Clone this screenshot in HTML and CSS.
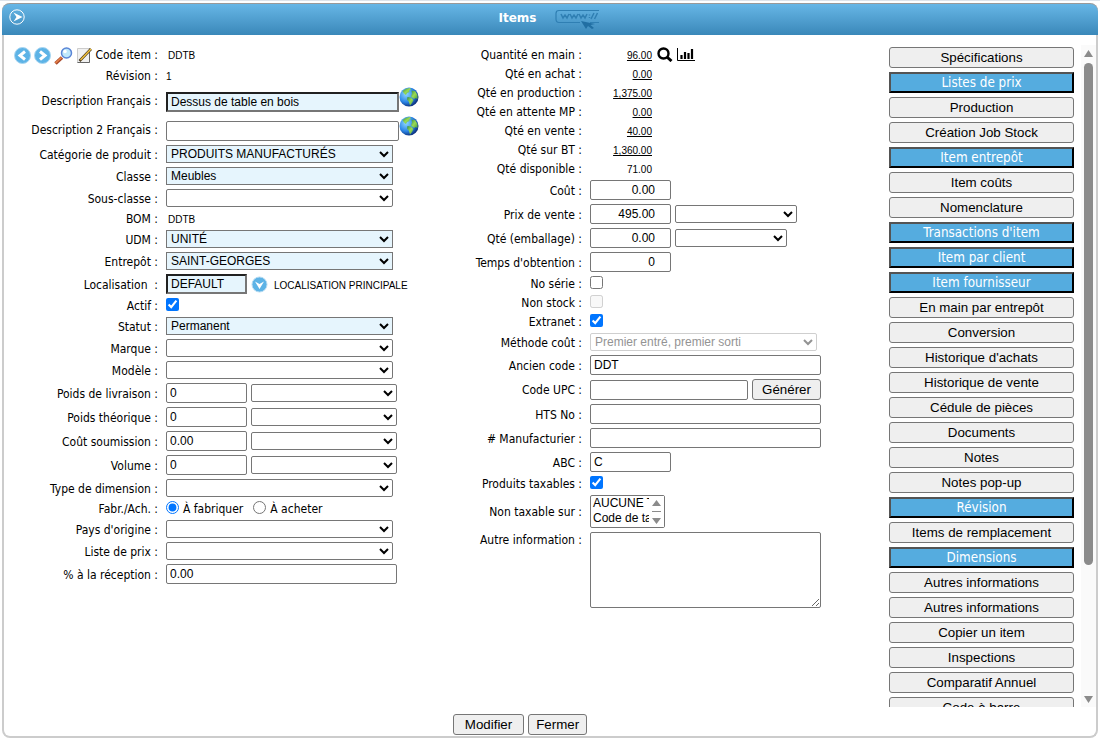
FILE: index.html
```html
<!DOCTYPE html>
<html lang="fr">
<head>
    <meta charset="UTF-8">
    <meta name="viewport" content="width=device-width, initial-scale=1.0">
    <title>Items</title>
    <link rel="stylesheet" href="styles.css">
</head>
<body>
    <!-- Icons used more than once -->
    <svg class="defs" width="0" height="0">
        <defs>
            <radialGradient id="sea" cx="35%" cy="35%" r="70%">
                <stop offset="0" stop-color="#8fd8ff"/>
                <stop offset="0.6" stop-color="#2c86e6"/>
                <stop offset="1" stop-color="#0a2c78"/>
            </radialGradient>
            <linearGradient id="land" x1="0" y1="0" x2="1" y2="1">
                <stop offset="0" stop-color="#2f8a4a"/>
                <stop offset="0.5" stop-color="#9ada55"/>
                <stop offset="1" stop-color="#4f9f3a"/>
            </linearGradient>
            <symbol id="globe" viewBox="0 0 20 20">
                <circle cx="10" cy="10" r="9.500" fill="url(#sea)"/>
                <path d="M3.500 4 Q7 1 11 1 L12 2.500 L10 3.500 L10.500 5 L8 6 L7 8 L5 6.500 Z" fill="url(#land)"/>
                <path d="M12.500 3.500 L16 4 L18.500 8 L18.500 12 L16.500 11 L15 12 L12 9.500 L13 6.500 Z" fill="url(#land)"/>
                <path d="M8.500 10 L12 10.500 L14.500 13 L13 16 L11 18.500 L10 15 L8 12.500 Z" fill="url(#land)"/>
            </symbol>
        </defs>
    </svg>

    <div class="panel">
        <header class="panel-header">
            <button class="icon-button" aria-label="Menu">
                <svg width="16" height="16" viewBox="0 0 16 16">
                    <circle cx="8" cy="8" r="7.200" fill="none" stroke="#fff"/>
                    <path d="M4.500 3.500 L13.500 8 L4.500 12.500 L7.500 8 Z" fill="#fff"/>
                </svg>
            </button>
            <div class="title">
                <h1>Items</h1>
                <svg width="46" height="20" viewBox="0 0 46 20">
                    <path d="M45 1.500 H5 Q2 1.500 2 4.500 V10 Q2 13.500 5 13.500 H26 M36 13.500 H45" fill="none" stroke="#2f7fb3" stroke-width="1.200"/>
                    <path d="M7 5 l2 4 l2 -3 l2 3 l2 -4 M16 5 l2 4 l2 -3 l2 3 l2 -4 M25 5 l2 4 l2 -3 l2 3 l2 -4 M35.500 5.500 v1 M35.500 8 v1 M37 10 l3 -6 M40.500 10 l3 -6" fill="none" stroke="#2f7fb3" stroke-width="1.500"/>
                    <path d="M27 12 L41 15 L36.500 16 L40 19 L38 20 L34 17 L32 20 Z" fill="#216fa3"/>
                </svg>
            </div>
        </header>

        <main class="content">
            <form class="column left">
                <div class="row first">
                    <div class="label">
                        <button type="button" class="icon-button" aria-label="Précédent">
                            <svg width="17" height="17" viewBox="0 0 17 17"><circle cx="8.500" cy="8.500" r="8" fill="#5db3e6" stroke="#a8d6f1"/><path d="M11 4.500 L6 8.500 L11 12.500" fill="none" stroke="#fff" stroke-width="3"/></svg>
                        </button>
                        <button type="button" class="icon-button" aria-label="Suivant">
                            <svg width="17" height="17" viewBox="0 0 17 17"><circle cx="8.500" cy="8.500" r="8" fill="#5db3e6" stroke="#a8d6f1"/><path d="M6 4.500 L11 8.500 L6 12.500" fill="none" stroke="#fff" stroke-width="3"/></svg>
                        </button>
                        <button type="button" class="icon-button" aria-label="Rechercher">
                            <svg width="19" height="18" viewBox="0 0 19 18"><path d="M1.500 16.500 L8 10.500" stroke="#a8472a" stroke-width="3.500"/><path d="M1.500 16 L7.500 10.500" stroke="#e8854a" stroke-width="1.500"/><circle cx="12.500" cy="6" r="5" fill="#bfe8fb" stroke="#5a85d6" stroke-width="1.500"/><circle cx="11" cy="4.500" r="1.800" fill="#fff"/></svg>
                        </button>
                        <button type="button" class="icon-button" aria-label="Éditer">
                            <svg width="16" height="17" viewBox="0 0 16 17"><path d="M1.500 1.500 H13.500 V15.500 H1.500 Z" fill="#f1f1f1" stroke="#ccc"/><path d="M13.500 1.500 V15.500 H1.500" fill="none" stroke="#666"/><path d="M3.500 14 L15 2" stroke="#4a3a20" stroke-width="2.600"/><path d="M4.500 13 L15 2" stroke="#f3c33a" stroke-width="1.400"/></svg>
                        </button>
                        <span>Code item :</span>
                    </div>
                    <span class="value indent">DDTB</span>
                </div>
                <div class="row"><div class="label">Révision :</div><span class="value">1</span></div>
                <div class="row globe-row">
                    <label class="label" for="desc1">Description Français :</label>
                    <input class="w-desc required" type="text" id="desc1" value="Dessus de table en bois">
                    <button type="button" class="icon-button" aria-label="Traduire"><svg width="20" height="20"><use href="#globe"/></svg></button>
                </div>
                <div class="row globe-row">
                    <label class="label" for="desc2">Description 2 Français :</label>
                    <input class="w-desc" type="text" id="desc2">
                    <button type="button" class="icon-button" aria-label="Traduire"><svg width="20" height="20"><use href="#globe"/></svg></button>
                </div>
                <div class="row"><label class="label" for="category">Catégorie de produit :</label><select class="w-select filled" id="category"><option>PRODUITS MANUFACTURÉS</option></select></div>
                <div class="row"><label class="label" for="class">Classe :</label><select class="w-select filled" id="class"><option>Meubles</option></select></div>
                <div class="row"><label class="label" for="subclass">Sous-classe :</label><select class="w-select" id="subclass"><option></option></select></div>
                <div class="row"><div class="label">BOM :</div><span class="value indent">DDTB</span></div>
                <div class="row"><label class="label" for="udm">UDM :</label><select class="w-select filled" id="udm"><option>UNITÉ</option></select></div>
                <div class="row"><label class="label" for="warehouse">Entrepôt :</label><select class="w-select filled" id="warehouse"><option>SAINT-GEORGES</option></select></div>
                <div class="row">
                    <label class="label" for="location">Localisation &nbsp;:</label>
                    <input class="w-small required" type="text" id="location" value="DEFAULT">
                    <button type="button" class="icon-button" aria-label="Choisir">
                        <svg width="17" height="17" viewBox="0 0 17 17"><circle cx="8.500" cy="8.500" r="7.500" fill="#5db3e6" stroke="#b5dbf2"/><path d="M4 5.500 L8.500 8 L13 5.500 L8.500 13 Z" fill="#fff"/></svg>
                    </button>
                    <span class="value indent">LOCALISATION PRINCIPALE</span>
                </div>
                <div class="row"><label class="label" for="active">Actif :</label><input type="checkbox" id="active" checked></div>
                <div class="row"><label class="label" for="status">Statut :</label><select class="w-select filled" id="status"><option>Permanent</option></select></div>
                <div class="row"><label class="label" for="brand">Marque :</label><select class="w-select" id="brand"><option></option></select></div>
                <div class="row"><label class="label" for="model">Modèle :</label><select class="w-select" id="model"><option></option></select></div>
                <div class="row"><label class="label" for="shipWeight">Poids de livraison :</label><input class="w-small" type="text" id="shipWeight" value="0"><select class="w-unit" aria-label="Unité poids de livraison"><option></option></select></div>
                <div class="row"><label class="label" for="theoWeight">Poids théorique :</label><input class="w-small" type="text" id="theoWeight" value="0"><select class="w-unit" aria-label="Unité poids théorique"><option></option></select></div>
                <div class="row"><label class="label" for="bidCost">Coût soumission :</label><input class="w-small" type="text" id="bidCost" value="0.00"><select class="w-unit" aria-label="Unité coût soumission"><option></option></select></div>
                <div class="row"><label class="label" for="volume">Volume :</label><input class="w-small" type="text" id="volume" value="0"><select class="w-unit" aria-label="Unité volume"><option></option></select></div>
                <div class="row"><label class="label" for="dimType">Type de dimension :</label><select class="w-select" id="dimType"><option></option></select></div>
                <div class="row">
                    <div class="label">Fabr./Ach. :</div>
                    <label class="choice"><input type="radio" name="source" checked>À fabriquer</label>
                    <label class="choice"><input type="radio" name="source">À acheter</label>
                </div>
                <div class="row"><label class="label" for="country">Pays d'origine :</label><select class="w-select" id="country"><option></option></select></div>
                <div class="row"><label class="label" for="priceList">Liste de prix :</label><select class="w-select" id="priceList"><option></option></select></div>
                <div class="row"><label class="label" for="reception">% à la réception :</label><input class="w-full" type="text" id="reception" value="0.00"></div>
            </form>

            <form class="column right">
                <div class="row">
                    <div class="label">Quantité en main :</div>
                    <a class="value qty" href="#">96.00</a>
                    <button type="button" class="icon-button" aria-label="Détails">
                        <svg width="16" height="15" viewBox="0 0 16 15"><circle cx="6.500" cy="6.500" r="5" fill="none" stroke="#000" stroke-width="2.400"/><path d="M10 10 L14.500 14" stroke="#000" stroke-width="3"/></svg>
                    </button>
                    <button type="button" class="icon-button" aria-label="Graphique">
                        <svg width="18" height="15" viewBox="0 0 18 15"><path d="M0.500 1 V13.500 H18" fill="none" stroke="#000"/><path d="M4.500 12 V8 M8 12 V5 M11.500 12 V6 M15 12 V2" stroke="#000" stroke-width="2.200"/></svg>
                    </button>
                </div>
                <div class="row"><div class="label">Qté en achat :</div><a class="value qty" href="#">0.00</a></div>
                <div class="row"><div class="label">Qté en production :</div><a class="value qty" href="#">1,375.00</a></div>
                <div class="row"><div class="label">Qté en attente MP :</div><a class="value qty" href="#">0.00</a></div>
                <div class="row"><div class="label">Qté en vente :</div><a class="value qty" href="#">40.00</a></div>
                <div class="row"><div class="label">Qté sur BT :</div><a class="value qty" href="#">1,360.00</a></div>
                <div class="row"><div class="label">Qté disponible :</div><span class="value qty">71.00</span></div>
                <div class="row"><label class="label" for="cost">Coût :</label><input class="w-small number" type="text" id="cost" value="0.00"></div>
                <div class="row"><label class="label" for="price">Prix de vente :</label><input class="w-small number" type="text" id="price" value="495.00"><select class="w-price" aria-label="Unité de vente"><option></option></select></div>
                <div class="row"><label class="label" for="pack">Qté (emballage) :</label><input class="w-small number" type="text" id="pack" value="0.00"><select class="w-pack" aria-label="Unité emballage"><option></option></select></div>
                <div class="row"><label class="label" for="leadTime">Temps d'obtention :</label><input class="w-small number" type="text" id="leadTime" value="0"></div>
                <div class="row"><label class="label" for="serial">No série :</label><input type="checkbox" id="serial"></div>
                <div class="row"><label class="label" for="nonStock">Non stock :</label><input type="checkbox" id="nonStock" disabled></div>
                <div class="row"><label class="label" for="extranet">Extranet :</label><input type="checkbox" id="extranet" checked></div>
                <div class="row"><label class="label" for="costMethod">Méthode coût :</label><select class="w-select" id="costMethod" disabled><option>Premier entré, premier sorti</option></select></div>
                <div class="row"><label class="label" for="oldCode">Ancien code :</label><input class="w-full" type="text" id="oldCode" value="DDT"></div>
                <div class="row"><label class="label" for="upc">Code UPC :</label><input class="w-upc" type="text" id="upc"><button type="button" class="button">Générer</button></div>
                <div class="row"><label class="label" for="hts">HTS No :</label><input class="w-full" type="text" id="hts"></div>
                <div class="row"><label class="label" for="maker"># Manufacturier :</label><input class="w-full" type="text" id="maker"></div>
                <div class="row"><label class="label" for="abc">ABC :</label><input class="w-small" type="text" id="abc" value="C"></div>
                <div class="row"><label class="label" for="taxable">Produits taxables :</label><input type="checkbox" id="taxable" checked></div>
                <div class="row">
                    <label class="label" for="nonTaxable">Non taxable sur :</label>
                    <div class="listbox">
                        <select id="nonTaxable" multiple size="2">
                            <option>AUCUNE TAXE</option>
                            <option>Code de taxe</option>
                        </select>
                        <svg class="list-arrows" width="15" height="31" viewBox="0 0 15 31"><path d="M3 10 L7.500 4 L12 10 Z M3 22 L7.500 28 L12 22 Z" fill="#8b8b8b"/><path d="M3 15.500 H12" stroke="#8b8b8b"/></svg>
                    </div>
                </div>
                <div class="row top"><label class="label" for="other">Autre information :</label><textarea class="w-full" id="other"></textarea></div>
            </form>

            <aside class="sidebar">
                <nav class="menu">
                    <button class="button">Spécifications</button>
                    <button class="button active">Listes de prix</button>
                    <button class="button">Production</button>
                    <button class="button">Création Job Stock</button>
                    <button class="button active">Item entrepôt</button>
                    <button class="button">Item coûts</button>
                    <button class="button">Nomenclature</button>
                    <button class="button active">Transactions d'item</button>
                    <button class="button active">Item par client</button>
                    <button class="button active">Item fournisseur</button>
                    <button class="button">En main par entrepôt</button>
                    <button class="button">Conversion</button>
                    <button class="button">Historique d'achats</button>
                    <button class="button">Historique de vente</button>
                    <button class="button">Cédule de pièces</button>
                    <button class="button">Documents</button>
                    <button class="button">Notes</button>
                    <button class="button">Notes pop-up</button>
                    <button class="button active">Révision</button>
                    <button class="button">Items de remplacement</button>
                    <button class="button active">Dimensions</button>
                    <button class="button">Autres informations</button>
                    <button class="button">Autres informations</button>
                    <button class="button">Copier un item</button>
                    <button class="button">Inspections</button>
                    <button class="button">Comparatif Annuel</button>
                    <button class="button">Code à barre</button>
                </nav>
                <div class="scrollbar">
                    <svg width="9" height="7" viewBox="0 0 9 7"><path d="M4.500 0 L9 7 H0 Z" fill="#8b8b8b"/></svg>
                    <div class="track"><div class="thumb"></div></div>
                    <svg width="9" height="7" viewBox="0 0 9 7"><path d="M0 0 H9 L4.500 7 Z" fill="#8b8b8b"/></svg>
                </div>
            </aside>
        </main>

        <footer class="actions">
            <button class="button edit">Modifier</button>
            <button class="button">Fermer</button>
        </footer>
    </div>
</body>
</html>
```
FILE: styles.css
```css
* {
    box-sizing: border-box;
}
body {
    margin: 0;
    padding: 2px 2px 3px;
    height: 100vh;
    background-color: #fff;
    border-top: 1px solid #dde3ea;
    font-family: "DejaVu Sans Condensed", Tahoma, sans-serif;
    font-size: 12px;
    line-height: 15px;
    color: #000;
}
.defs {
    position: absolute;
}
svg {
    display: block;
}
.panel {
    display: flex;
    flex-direction: column;
    height: 100%;
    border: 2px solid #ccc;
    border-top: 0;
    border-radius: 8px;
}
.panel-header {
    display: flex;
    align-items: flex-start;
    flex-shrink: 0;
    height: 32px;
    margin: 0 -2px;
    padding: 5px 7px;
    background: linear-gradient(#67b6e6, #3a88b9);
    border-top: 1px solid #999;
    border-radius: 8px 8px 0 0;
}
.title {
    display: flex;
    flex: 1;
    justify-content: center;
    gap: 17px;
    margin-right: 18px;
}
h1 {
    margin: 0;
    padding-top: 2px;
    font-family: Verdana, "DejaVu Sans", sans-serif;
    font-size: 12px;
    font-weight: bold;
    color: #fff;
}
.icon-button {
    flex-shrink: 0;
    padding: 0;
    border: 0;
    background: none;
    cursor: pointer;
}

/* Form columns */
.content {
    display: flex;
    flex: 1;
    min-height: 0;
    padding-top: 10px;
}
.left {
    width: 437px;
}
.right {
    width: 439px;
}
.row {
    display: flex;
    align-items: center;
    gap: 4px;
    padding: 2px 0;
}
.first {
    height: 21px;
}
.label {
    flex-shrink: 0;
    padding-top: 2px;
    line-height: 13px;
    text-align: right;
    white-space: nowrap;
    margin-right: 4px;
}
.first .label {
    display: flex;
    align-items: center;
    justify-content: flex-end;
    gap: 3px;
    padding-top: 0;
}
.left .label {
    width: 154px;
}
.right .label {
    width: 141px;
}
.top {
    align-items: flex-start;
}
.globe-row {
    gap: 0;
    height: 29px;
}
.globe-row .label {
    margin-right: 8px;
    padding-top: 4px;
}
.globe-row input {
    align-self: flex-end;
}
.globe-row .icon-button {
    align-self: flex-start;
}
.value {
    padding-top: 2px;
    font-family: Arial, "Liberation Sans", sans-serif;
    font-size: 10px;
    line-height: 13px;
    color: #000;
}
.indent {
    padding-left: 2px;
}
.first .value {
    padding-top: 0;
}
.qty {
    width: 62px;
    margin-right: 1px;
    text-align: right;
}
.choice {
    display: flex;
    gap: 4px;
    margin-right: 6px;
    padding-top: 2px;
    line-height: 13px;
}
.choice input[type="radio"] {
    margin-top: -2px;
}

/* Controls */
input, select, textarea {
    margin: 0;
    border: 1px solid #767676;
    border-radius: 2px;
    background-color: #fff;
    font-family: Arial, "Liberation Sans", sans-serif;
    font-size: 12px;
    color: #000;
}
input[type="text"] {
    height: 20px;
    padding: 0 3px;
}
input[type="checkbox"], input[type="radio"] {
    align-self: flex-start;
    width: 13px;
    height: 13px;
}
select {
    height: 18px;
}
select:disabled {
    color: #666;
    border-color: #bbb;
}
input.required {
    border: 2px inset #767676;
    border-radius: 0;
    background-color: #e6f5fd;
}
.filled {
    border-radius: 0;
    background-color: #e6f5fd;
}
input.number {
    padding-right: 15px;
    text-align: right;
}
.w-desc {
    width: 233px;
}
.w-select {
    width: 227px;
}
.w-full {
    width: 231px;
}
.w-small {
    width: 81px;
}
.w-unit {
    width: 146px;
}
.w-price {
    width: 122px;
}
.w-pack {
    width: 112px;
}
.w-upc {
    width: 158px;
}
textarea {
    height: 76px;
}
.listbox {
    position: relative;
    width: 75px;
    height: 33px;
}
.listbox select {
    width: 75px;
    height: 33px;
    overflow: hidden;
}
.list-arrows {
    position: absolute;
    top: 1px;
    right: 1px;
    background-color: #fff;
}
.button {
    height: 21px;
    padding: 0 7px;
    border: 1px solid #767676;
    border-radius: 3px;
    background-color: #efefef;
    font-family: Arial, "Liberation Sans", sans-serif;
    color: #000;
    cursor: pointer;
}
.right .button {
    width: 69px;
}

/* Side menu */
.sidebar {
    display: flex;
    flex: 1;
    gap: 7px;
    min-width: 0;
}
.menu {
    display: flex;
    flex: 1;
    flex-direction: column;
    gap: 4px;
    padding: 2px 0 0 9px;
    overflow: hidden;
}
.menu .button {
    flex-shrink: 0;
}
.menu .active {
    border: 2px outset #000;
    border-radius: 0;
    background-color: #55acdf;
    font-family: "DejaVu Sans Condensed", Tahoma, sans-serif;
    color: #fff;
}
.scrollbar {
    display: flex;
    flex-direction: column;
    align-items: center;
    gap: 6px;
    width: 15px;
    padding: 5px 0 4px;
    background-color: #fafafa;
}
.track {
    flex: 1;
}
.thumb {
    width: 9px;
    height: 80%;
    border-radius: 5px;
    background-color: #8b8b8b;
}
.actions {
    display: flex;
    justify-content: center;
    gap: 4px;
    padding: 7px 60px 1px 0;
}
.actions .edit {
    padding: 0 11px;
}
```
